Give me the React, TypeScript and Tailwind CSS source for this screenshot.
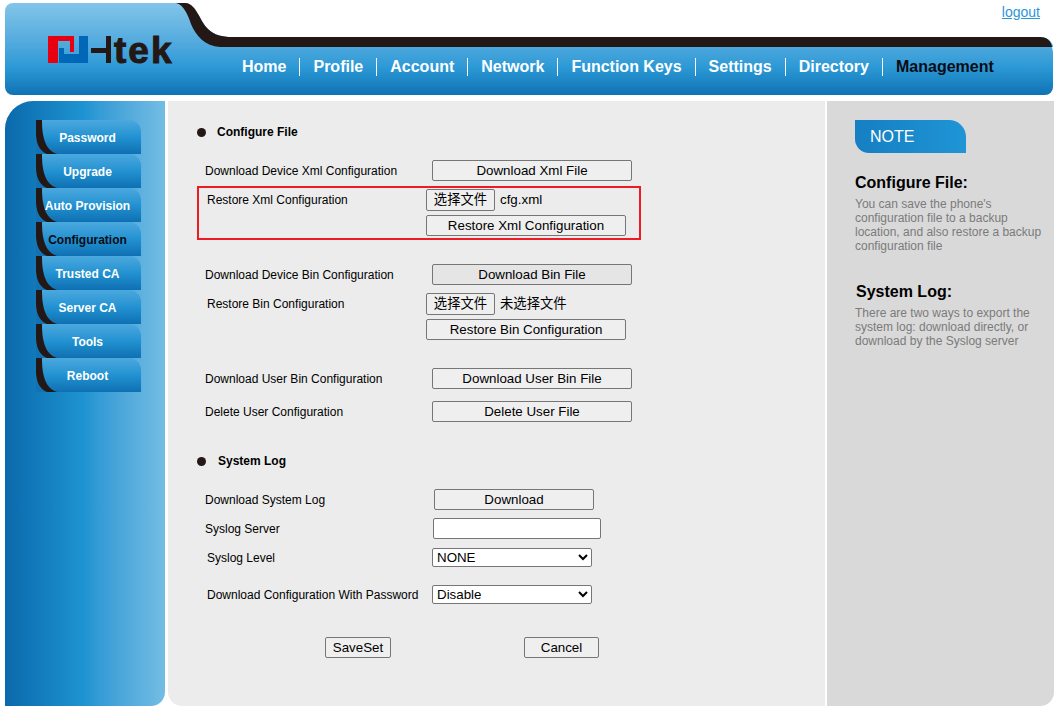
const font = '[font-family:"Liberation_Sans","Noto_Sans_CJK_SC",sans-serif]';

const navItems = ['Home', 'Profile', 'Account', 'Network', 'Function Keys', 'Settings', 'Directory', 'Management'];
const menuItems = ['Password', 'Upgrade', 'Auto Provision', 'Configuration', 'Trusted CA', 'Server CA', 'Tools', 'Reboot'];

function Logo() {
  return (
    <svg width="136" height="48" viewBox="46 26 136 48" className="block">
      <path d="M48 36H74V52H70V41H58V63H48Z" fill="#e60012" />
      <path d="M79 36H88V63H59V48H64V54H79Z" fill="#0068b7" />
      <path d="M91 48H106V53H91Z" fill="#231815" />
      <path d="M106 36H111V63H106Z" fill="#231815" />
      <text x="114" y="63" fontFamily="Liberation Sans" fontWeight="700" fontSize="37" letterSpacing="2" stroke="#231815" strokeWidth="1" fill="#231815">tek</text>
    </svg>
  );
}

function Header() {
  return (
    <header className="relative h-[92px] rounded-[8px] bg-gradient-to-b from-[#82c5e9] via-[#2b99d6] via-70% to-[#0f72b4]">
      <svg className="absolute inset-0 h-full w-full" viewBox="5 3 1048 92" preserveAspectRatio="none">
        <path d="M186 2C198 8 200 22 209 30C215 35 222 37 232 37H1040C1048 37 1053 42 1054 50V2Z" fill="#fff" />
        <path d="M176 3H186C197 5 199 20 208 29C214 35 222 37 232 37H1040C1047 37 1051 41 1052 47H220C205 46 196 36 191 24C188 15 184 5 176 3Z" fill="#231815" />
        <path d="M1052 47L1053 52V47Z" fill="#fff" />
      </svg>
      <a className="absolute right-[13px] top-0 text-[14px] leading-[18px] text-[#2b96d8] underline">logout</a>
      <div className="absolute left-[41px] top-[23px]">
        <Logo />
      </div>
      <nav className="absolute left-[237px] top-[55px] flex h-[18px] items-center">
        {navItems.map((item, i) => (
          <div key={item} className="flex items-center">
            {i > 0 && <span className="mx-[13px] h-[18px] w-px bg-white" />}
            <span className={`text-[16px] font-bold leading-[18px] ${item === 'Management' ? 'text-[#0b0b14]' : 'text-white'}`}>{item}</span>
          </div>
        ))}
      </nav>
    </header>
  );
}

function Sidebar() {
  return (
    <aside className="w-[160px] shrink-0 rounded-tl-[28px] rounded-br-[14px] bg-gradient-to-r from-[#0a69ab] via-[#1f94d2] via-50% to-[#73bde4] pl-[31px] pt-[19px]">
      {menuItems.map((item) => (
        <div key={item} className="relative h-[34px] w-[105px] overflow-hidden rounded-tr-[12px] bg-gradient-to-b from-[#4aa8dd] via-[#2292d2] via-50% to-[#0e70b2]">
          <svg className="absolute left-0 top-0" width="22" height="34" viewBox="0 0 22 34">
            <path d="M0 16C0 26 5 32 11 34H0Z" fill="#1173b5" />
            <path d="M0 0H6C6 14 8 30 21 34H11C4 31 0 24 0 14Z" fill="#231815" />
          </svg>
          <div className={`relative flex h-[35px] items-center justify-center pr-[2px] pt-[1px] text-[12px] font-bold ${item === 'Configuration' ? 'text-[#0b0b14]' : 'text-white'}`}>
            {item}
          </div>
        </div>
      ))}
    </aside>
  );
}

function Btn({ w, children, hover }: { w: string; children: React.ReactNode; hover?: boolean }) {
  return (
    <button className={`${w} block h-[21px] rounded-[2px] border border-[#767676] text-[13.33px] leading-[19px] text-black ${hover ? 'bg-[#e5e5e5]' : 'bg-[#efefef]'}`}>
      {children}
    </button>
  );
}

function Choose({ file }: { file: string }) {
  return (
    <div className="flex items-center">
      <button className="block h-[22px] w-[69px] rounded-[2px] border border-[#767676] bg-[#efefef] text-[13.33px] leading-[20px] text-black">选择文件</button>
      <span className="ml-[5px] text-[13.33px] text-black">{file}</span>
    </div>
  );
}

function Label({ w, children, className }: { w: string; children: React.ReactNode; className?: string }) {
  return <div className={`${w} shrink-0 text-[12px] leading-[14px] text-black ${className ?? ''}`}>{children}</div>;
}

function Heading({ children, left }: { children: React.ReactNode; left: string }) {
  return (
    <div className="flex h-[14px] items-center pl-[29px]">
      <span className="h-[9px] w-[9px] rounded-full bg-[#231815]" />
      <span className={`${left} text-[12px] font-bold text-black`}>{children}</span>
    </div>
  );
}

function Main() {
  return (
    <main className="ml-[3px] w-[657px] shrink-0 rounded-bl-[14px] bg-[#ececec] pt-[24px]">
      <Heading left="ml-[11px]">Configure File</Heading>

      <div className="mt-[21px] flex h-[21px] items-center pl-[37px]">
        <Label w="w-[227px]">Download Device Xml Configuration</Label>
        <Btn w="w-[200px]">Download Xml File</Btn>
      </div>

      <div className="ml-[29px] mt-[5px] h-[54px] w-[444px] border-2 border-[#ed1c24] pl-[8px] pt-[1px]">
        <div className="flex h-[22px] items-center">
          <Label w="w-[219px]">Restore Xml Configuration</Label>
          <Choose file="cfg.xml" />
        </div>
        <div className="mt-[4px] pl-[219px]">
          <Btn w="w-[200px]">Restore Xml Configuration</Btn>
        </div>
      </div>

      <div className="mt-[24px] flex h-[21px] items-center pl-[37px]">
        <Label w="w-[227px]">Download Device Bin Configuration</Label>
        <Btn w="w-[200px]" hover>Download Bin File</Btn>
      </div>
      <div className="mt-[8px] flex h-[22px] items-center pl-[39px]">
        <Label w="w-[219px]">Restore Bin Configuration</Label>
        <Choose file="未选择文件" />
      </div>
      <div className="mt-[4px] pl-[258px]">
        <Btn w="w-[200px]">Restore Bin Configuration</Btn>
      </div>

      <div className="mt-[28px] flex h-[21px] items-center pl-[37px]">
        <Label w="w-[227px]">Download User Bin Configuration</Label>
        <Btn w="w-[200px]">Download User Bin File</Btn>
      </div>
      <div className="mt-[12px] flex h-[21px] items-center pl-[37px]">
        <Label w="w-[227px]">Delete User Configuration</Label>
        <Btn w="w-[200px]">Delete User File</Btn>
      </div>

      <div className="mt-[32px]">
        <Heading left="ml-[12px]">System Log</Heading>
      </div>

      <div className="mt-[21px] flex h-[21px] items-center pl-[37px]">
        <Label w="w-[229px]">Download System Log</Label>
        <Btn w="w-[160px]">Download</Btn>
      </div>
      <div className="mt-[8px] flex h-[21px] items-center pl-[37px]">
        <Label w="w-[228px]">Syslog Server</Label>
        <input className="block h-[21px] w-[168px] rounded-[2px] border border-[#767676] bg-white" />
      </div>
      <div className="mt-[9px] flex h-[19px] items-center pl-[39px]">
        <Label w="w-[225px]">Syslog Level</Label>
        <select className="h-[19px] w-[160px] rounded-[2px] border border-[#767676] bg-white text-[13.33px] leading-[17px] text-black" defaultValue="NONE">
          <option>NONE</option>
        </select>
      </div>
      <div className="mt-[18px] flex h-[19px] items-center pl-[39px]">
        <Label w="w-[225px]">Download Configuration With Password</Label>
        <select className="h-[19px] w-[160px] rounded-[2px] border border-[#767676] bg-white text-[13.33px] leading-[17px] text-black" defaultValue="Disable">
          <option>Disable</option>
        </select>
      </div>

      <div className="mt-[33px] flex pl-[157px]">
        <Btn w="w-[66px]">SaveSet</Btn>
        <div className="ml-[133px]">
          <Btn w="w-[75px]">Cancel</Btn>
        </div>
      </div>
    </main>
  );
}

function Note() {
  return (
    <section className="ml-[2px] w-[227px] shrink-0 rounded-br-[14px] bg-[#d9d9d9] pl-[28px] pt-[19px]">
      <div className="flex h-[33px] w-[111px] items-center rounded-tr-[17px] rounded-bl-[14px] bg-gradient-to-r from-[#157fc2] to-[#1f95d6] pl-[15px] text-[16px] text-white">
        NOTE
      </div>
      <h2 className="mt-[21px] text-[16px] font-bold leading-[18px] text-black">Configure File:</h2>
      <p className="mt-[5px] w-[195px] text-[12px] leading-[14px] text-[#7b7b7b]">
        You can save the phone's configuration file to a backup location, and also restore a backup configuration file
      </p>
      <h2 className="ml-[1px] mt-[30px] text-[16px] font-bold leading-[18px] text-black">System Log:</h2>
      <p className="mt-[5px] w-[195px] text-[12px] leading-[14px] text-[#7b7b7b]">
        There are two ways to export the system log: download directly, or download by the Syslog server
      </p>
    </section>
  );
}

export default function App() {
  return (
    <div className={`h-[708px] w-[1059px] overflow-hidden bg-white pl-[5px] pt-[3px] ${font}`}>
      <div className="w-[1048px]">
        <Header />
      </div>
      <div className="mt-[6px] flex h-[605px]">
        <Sidebar />
        <Main />
        <Note />
      </div>
    </div>
  );
}
